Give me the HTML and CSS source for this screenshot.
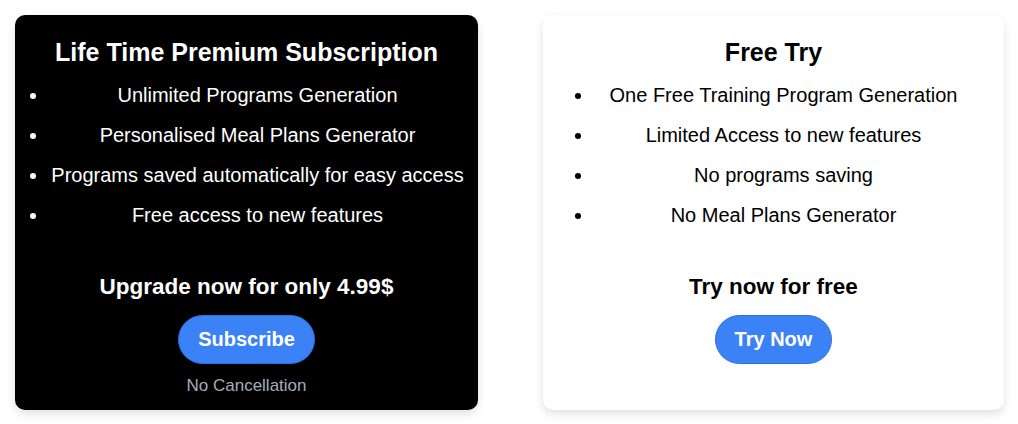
FILE: index.html
```html
<!DOCTYPE html>
<html lang="en">
<head>
<meta charset="utf-8">
<title>Plans</title>
<link rel="stylesheet" href="styles.css">
</head>
<body>
<main class="plans">
  <section class="card card-premium">
    <h2 class="card-title">Life Time Premium Subscription</h2>
    <ul class="features">
      <li>Unlimited Programs Generation</li>
      <li>Personalised Meal Plans Generator</li>
      <li>Programs saved automatically for easy access</li>
      <li>Free access to new features</li>
    </ul>
    <h3 class="cta-text">Upgrade now for only 4.99$</h3>
    <button class="btn">Subscribe</button>
    <p class="note">No Cancellation</p>
  </section>
  <section class="card card-free">
    <h2 class="card-title">Free Try</h2>
    <ul class="features">
      <li>One Free Training Program Generation</li>
      <li>Limited Access to new features</li>
      <li>No programs saving</li>
      <li>No Meal Plans Generator</li>
    </ul>
    <h3 class="cta-text">Try now for free</h3>
    <button class="btn">Try Now</button>
  </section>
</main>
</body>
</html>
```

FILE: styles.css
```css
* { box-sizing: border-box; }
html, body { margin: 0; padding: 0; background: #fff; }
body {
  font-family: "Liberation Sans", Arial, sans-serif;
  width: 1018px;
  height: 424px;
  overflow: hidden;
}
.plans {
  display: flex;
  align-items: stretch;
  gap: 65px;
  padding: 15px 14px 0 15px;
  height: 410px;
}
.card {
  display: flex;
  flex-direction: column;
  align-items: stretch;
  text-align: center;
  border-radius: 10px;
  box-shadow: 0 4px 10px rgba(0, 0, 0, 0.12);
  padding: 22px 16px 14px;
}
.card-premium {
  width: 463px;
  background: #000;
  color: #fff;
}
.card-free {
  width: 461px;
  background: #fff;
  color: #000;
  padding-left: 31px;
  padding-right: 31px;
}
.card-title {
  margin: 0;
  font-size: 25px;
  line-height: 30px;
  font-weight: 700;
}
.features {
  margin: 8px 0 0;
  padding: 0 0 0 20px;
  list-style: disc;
}
.card-premium .features {
  margin-left: -2px;
  margin-right: -4px;
}
.features li {
  font-size: 20px;
  line-height: 40px;
  white-space: nowrap;
}
.cta-text {
  margin: 37px 0 0;
  font-size: 22.5px;
  line-height: 30px;
  font-weight: 700;
}
.btn {
  align-self: center;
  margin-top: 13px;
  font-family: inherit;
  font-size: 20px;
  line-height: 23px;
  font-weight: 700;
  color: #fff;
  background: #3b82f6;
  border: 1px solid #2c6fe0;
  border-radius: 999px;
  padding: 12px 19px;
  cursor: pointer;
}
.note {
  margin: 12px 0 0;
  font-size: 17px;
  line-height: 20px;
  color: #a3adbb;
}
```
